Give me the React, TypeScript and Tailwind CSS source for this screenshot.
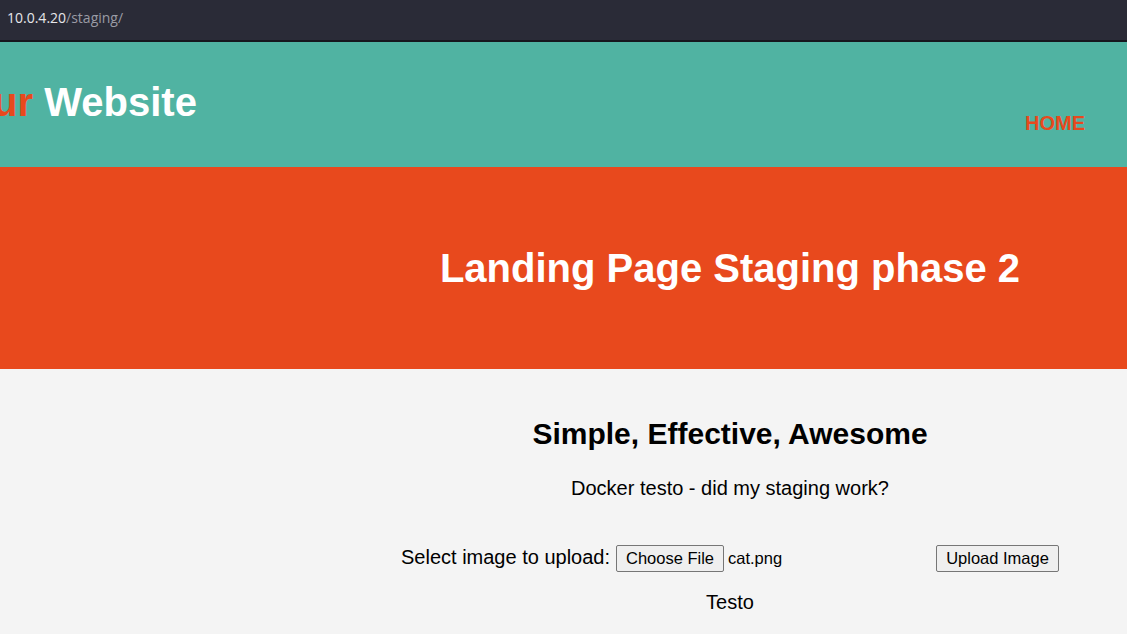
export default function App() {
  return (
    <div className="flex h-[634px] w-[1127px] flex-col overflow-hidden bg-[#f4f4f4] font-['Liberation_Sans',Arial,sans-serif]">
      {/* browser url bar */}
      <div className="flex h-[40px] shrink-0 items-center bg-[#2a2b37] px-[7px] pb-[6px] font-['Open_Sans','Noto_Sans',sans-serif] text-[14px]">
        <span className="text-[#e6e6ea]">10.0.4.20</span>
        <span className="text-[#9a9ba5]">/staging/</span>
      </div>
      <div className="h-[2px] shrink-0 bg-[#16171e]" />

      <header className="flex h-[125px] shrink-0 items-start justify-between bg-[#50b3a2] pr-[42px]">
        <h1 className="ml-[-38px] mt-[40px] text-[40px] font-bold leading-none text-white">
          <span className="text-[#e8491d]">Our</span> Website
        </h1>
        <nav className="mt-[66px] text-[20px] font-bold uppercase text-[#e8491d]">Home</nav>
      </header>

      <section className="flex h-[202px] shrink-0 items-center justify-center bg-[#e8491d] pl-[333px]">
        <h2 className="text-[40px] font-bold text-white">Landing Page Staging phase 2</h2>
      </section>

      <main className="flex flex-col items-center pl-[333px] text-black">
        <h3 className="mt-[50px] text-[30px] font-bold leading-none">Simple, Effective, Awesome</h3>
        <p className="mt-[29px] text-[20px] leading-none">Docker testo - did my staging work?</p>

        <form className="mt-[43px] flex items-center text-[20px]">
          <span className="leading-none">Select image to upload:</span>
          <div className="ml-[6px] mt-[4px] flex w-[320px] items-center">
            <button type="button" className="h-[27px] w-[108px] rounded-[2px] border border-[#767676] bg-[#efefef] text-[16.5px] text-black">
              Choose File
            </button>
            <span className="ml-[4px] text-[16.5px]">cat.png</span>
          </div>
          <button type="button" className="mt-[4px] h-[27px] w-[123px] rounded-[2px] border border-[#767676] bg-[#efefef] text-[16.5px] text-black">
            Upload Image
          </button>
        </form>

        <p className="mt-[20px] text-[20px] leading-none">Testo</p>
      </main>
    </div>
  );
}
